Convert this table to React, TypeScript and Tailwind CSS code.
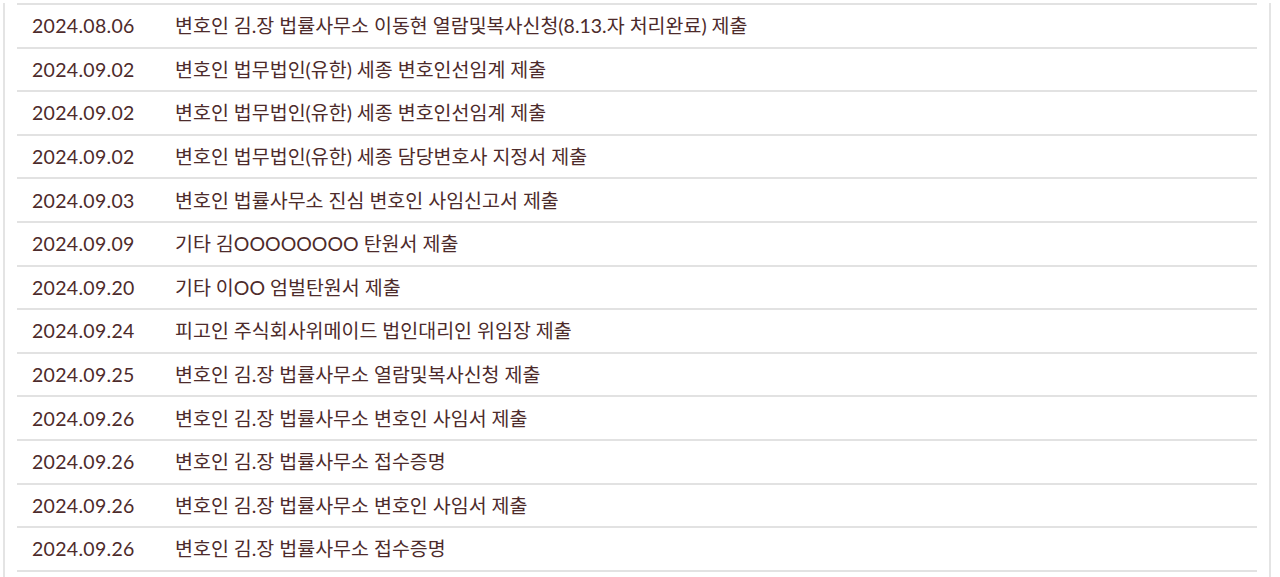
const rows = [
  ["2024.08.06", "변호인 김.장 법률사무소 이동현 열람및복사신청(8.13.자 처리완료) 제출"],
  ["2024.09.02", "변호인 법무법인(유한) 세종 변호인선임계 제출"],
  ["2024.09.02", "변호인 법무법인(유한) 세종 변호인선임계 제출"],
  ["2024.09.02", "변호인 법무법인(유한) 세종 담당변호사 지정서 제출"],
  ["2024.09.03", "변호인 법률사무소 진심 변호인 사임신고서 제출"],
  ["2024.09.09", "기타 김OOOOOOOO 탄원서 제출"],
  ["2024.09.20", "기타 이OO 엄벌탄원서 제출"],
  ["2024.09.24", "피고인 주식회사위메이드 법인대리인 위임장 제출"],
  ["2024.09.25", "변호인 김.장 법률사무소 열람및복사신청 제출"],
  ["2024.09.26", "변호인 김.장 법률사무소 변호인 사임서 제출"],
  ["2024.09.26", "변호인 김.장 법률사무소 접수증명"],
  ["2024.09.26", "변호인 김.장 법률사무소 변호인 사임서 제출"],
  ["2024.09.26", "변호인 김.장 법률사무소 접수증명"],
];

export default function App() {
  return (
    <div className="h-[577px] w-[1280px] overflow-hidden bg-white">
      <div
        className="ml-[3px] h-full w-[1268px] border-x-2 border-[#e4e4e4] pl-[12px] pr-[12px]"
        style={{ fontFamily: 'Lato, "Noto Sans CJK KR", "Noto Sans", sans-serif' }}
      >
        <div className="mt-[3px] border-t-2 border-[#e2e2e2]">
          {rows.map(([date, title], i) => (
            <div key={i} className="flex h-[43.6px] items-center border-b-2 border-[#e2e2e2] pl-[15px] text-[19.5px] text-[#4d2b2b]">
              <span className="w-[143px] shrink-0 tracking-[0.3px]">{date}</span>
              <span>{title}</span>
            </div>
          ))}
        </div>
      </div>
    </div>
  );
}
